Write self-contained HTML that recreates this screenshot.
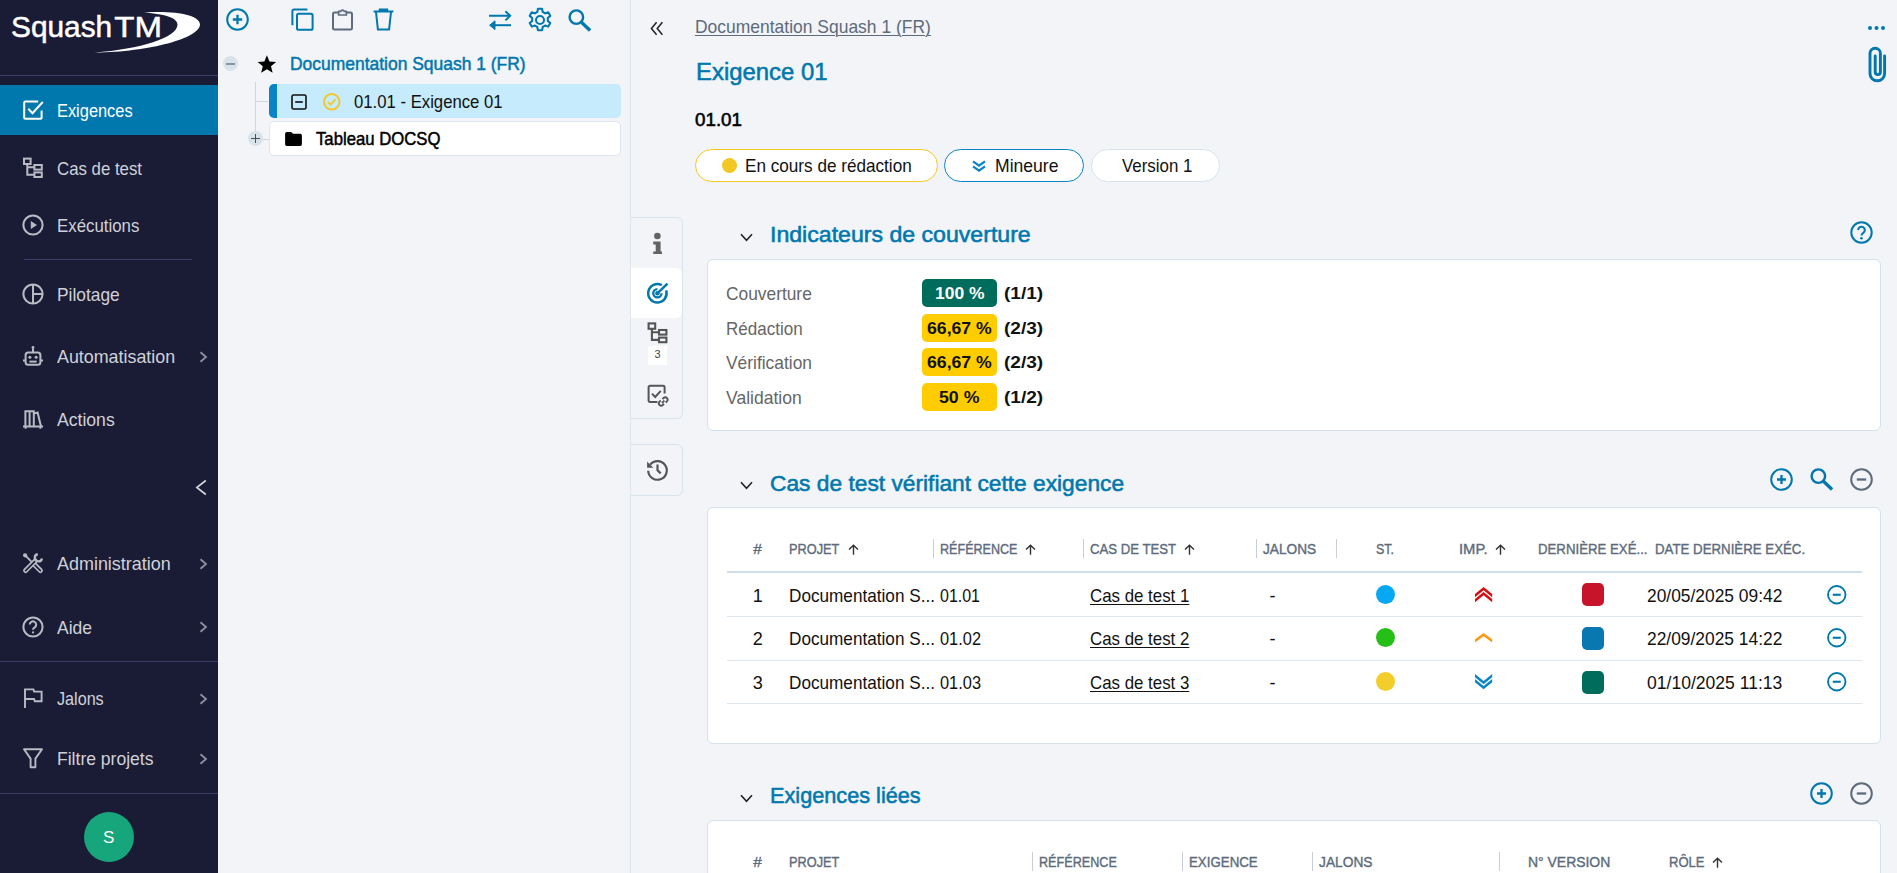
<!DOCTYPE html>
<html lang="fr">
<head>
<meta charset="utf-8">
<title>Squash TM - Exigence 01</title>
<style>
*{box-sizing:border-box;margin:0;padding:0}
html,body{width:1897px;height:873px;overflow:hidden;background:#f2f4f8;font-family:"Liberation Sans",sans-serif;color:#000}
.abs{position:absolute}
svg{display:block;overflow:visible}
.t{position:absolute;white-space:nowrap;line-height:20px;transform-origin:0 0}
#side{position:absolute;left:0;top:0;width:218px;height:873px;background:#1a1c36}
.hr{position:absolute;height:1px;background:#3a3d68}
#tree{position:absolute;left:218px;top:0;width:413px;height:873px;background:#f2f4f8;border-right:1px solid #dfe5ec}
.card{position:absolute;left:707px;width:1174px;background:#fff;border:1px solid #d3e2ec;border-radius:6px}
.sep{position:absolute;width:1px;height:19px;background:#c9ced6}
.rowline{position:absolute;left:727px;width:1135px;height:1px;background:#dbe6ee}
.pill{position:absolute;top:149px;height:33px;border-radius:17px;background:#fff;border:1px solid #d6e3ec}
</style>
</head>
<body>
<div id="side"></div>
<div id="tree"></div>
<!-- SIDEBAR -->
<svg class="abs" style="left:0;top:0;width:218px;height:75px" viewBox="0 0 218 75"><path d="M144 12.400C176 10.500 200 15 200 24.500C200 38 150 52 94.500 52.600C140 49 177.500 38 177.500 24.500C177.500 18 166 14 144 12.400Z" fill="#fff"/></svg>
<div class="t" id="t0" style="left:11.10px;top:16.70px;font-size:30.3px;color:#fff;-webkit-text-stroke:0.5px #fff;transform:scaleX(0.9843);">Squash<span style="display:inline-block;margin-left:2.130px;transform:scaleX(1.108);transform-origin:0 0">TM</span></div>
<div class="hr" style="left:0;top:75px;width:218px"></div>
<div class="abs" style="left:0;top:85px;width:218px;height:50px;background:#0078ae"></div>
<svg class="abs" style="left:21.800px;top:99.4px;width:22px;height:22px" viewBox="0 0 22 22" fill="none" stroke="#fff" stroke-width="2"><path d="M19.600 11.500v7.300a1 1 0 0 1-1 1H3.200a1 1 0 0 1-1-1V3.600a1 1 0 0 1 1-1h13" stroke-width="2"/><path d="M6.300 9.800l4.200 4.400L20.800 3" stroke-width="2"/></svg>
<div class="t" id="t1" style="left:57.30px;top:101.33px;font-size:18.1px;color:#fff;transform:scaleX(0.9056);">Exigences</div>
<svg class="abs" style="left:21.800px;top:157.4px;width:22px;height:22px" viewBox="0 0 22 22" fill="none" stroke="#b9bac4" stroke-width="2"><rect x="2" y="1.600" width="6.600" height="5.400"/><rect x="12.400" y="8" width="7.400" height="4.600"/><rect x="12.400" y="15.400" width="7.400" height="4.600"/><path d="M5.300 7v10.700h7.100M5.300 10.300h7.100"/></svg>
<div class="t" id="t2" style="left:57.30px;top:159.33px;font-size:18.1px;color:#d0d1d8;transform:scaleX(0.9286);">Cas de test</div>
<svg class="abs" style="left:21.800px;top:214.4px;width:22px;height:22px" viewBox="0 0 22 22" fill="none" stroke="#b9bac4" stroke-width="2"><circle cx="11" cy="11" r="9.600"/><path d="M8.800 6.900v8.200l6.200-4.100z" fill="#b9bac4" stroke="none"/></svg>
<div class="t" id="t3" style="left:57.30px;top:216.33px;font-size:18.1px;color:#d0d1d8;transform:scaleX(0.9298);">Exécutions</div>
<svg class="abs" style="left:21.800px;top:283.4px;width:22px;height:22px" viewBox="0 0 22 22" fill="none" stroke="#b9bac4" stroke-width="2"><circle cx="11" cy="11" r="9.600"/><path d="M11 1.400v19.200M11 11h9.600"/></svg>
<div class="t" id="t4" style="left:57.30px;top:285.33px;font-size:18.1px;color:#d0d1d8;transform:scaleX(0.9589);">Pilotage</div>
<svg class="abs" style="left:21.800px;top:345.4px;width:22px;height:22px" viewBox="0 0 22 22" fill="none" stroke="#b9bac4" stroke-width="2"><rect x="3.600" y="7.600" width="14.800" height="12.200" rx="2.600"/><path d="M11 7.600V3.200M1 15.600h2.600M18.400 15.600H21"/><circle cx="11" cy="2.400" r="1.400" fill="#b9bac4" stroke="none"/><circle cx="7.900" cy="12.300" r="1.500" fill="#b9bac4" stroke="none"/><circle cx="14.100" cy="12.300" r="1.500" fill="#b9bac4" stroke="none"/><path d="M7.400 16.600h7.200" stroke-width="2"/></svg>
<div class="t" id="t5" style="left:57.30px;top:347.33px;font-size:18.1px;color:#d0d1d8;transform:scaleX(0.9867);">Automatisation</div>
<svg class="abs" style="left:199px;top:350.7px;width:9px;height:12px" viewBox="0 0 9 12" fill="none" stroke="#8e90a3" stroke-width="1.800"><path d="M1.500 1.200L7 6l-5.500 4.800"/></svg>
<svg class="abs" style="left:21.800px;top:408.4px;width:22px;height:22px" viewBox="0 0 22 22" fill="none" stroke="#b9bac4" stroke-width="2"><path d="M1 18.400h20M3.600 18.400v2.400M18.400 18.400v2.400"/><path d="M3.400 18.400V3.200h4.200v15.200M7.600 18.400V3.200h4.200v15.200M11.800 5.600l3.800-1 3.400 13.800"/></svg>
<div class="t" id="t6" style="left:57.30px;top:410.33px;font-size:18.1px;color:#d0d1d8;transform:scaleX(0.9723);">Actions</div>
<svg class="abs" style="left:21.800px;top:552.4px;width:22px;height:22px" viewBox="0 0 22 22" fill="none" stroke="#b9bac4" stroke-width="2"><path d="M3.200 3.400l7.400 7.400" stroke-width="1.900"/><circle cx="3.100" cy="3.300" r="2.100" fill="#b9bac4" stroke="none"/><path d="M12.400 12.600l6 6" stroke-width="5" stroke-linecap="round"/><path d="M12.400 12.600l6 6" stroke="#1a1c36" stroke-width="1.500" stroke-linecap="round"/><path d="M3.600 18.600L13.200 9" stroke-width="5" stroke-linecap="round"/><path d="M3.600 18.600L13.600 8.600" stroke="#1a1c36" stroke-width="1.500" stroke-linecap="round"/><path d="M19.950 6.430A3.600 3.600 0 1 1 15.770 2.250" stroke-width="2.300"/></svg>
<div class="t" id="t7" style="left:57.30px;top:554.33px;font-size:18.1px;color:#d0d1d8;transform:scaleX(0.9917);">Administration</div>
<svg class="abs" style="left:199px;top:557.7px;width:9px;height:12px" viewBox="0 0 9 12" fill="none" stroke="#8e90a3" stroke-width="1.800"><path d="M1.500 1.200L7 6l-5.500 4.800"/></svg>
<svg class="abs" style="left:21.800px;top:615.9px;width:22px;height:22px" viewBox="0 0 22 22" fill="none" stroke="#b9bac4" stroke-width="2"><circle cx="11" cy="11" r="9.600"/><path d="M7.800 8.600a3.200 3.200 0 1 1 4.900 2.700c-1.100.7-1.700 1.200-1.700 2.500"/><circle cx="11" cy="16.400" r="1.100" fill="#b9bac4" stroke="none"/></svg>
<div class="t" id="t8" style="left:57.30px;top:617.83px;font-size:18.1px;color:#d0d1d8;transform:scaleX(0.9664);">Aide</div>
<svg class="abs" style="left:199px;top:621.2px;width:9px;height:12px" viewBox="0 0 9 12" fill="none" stroke="#8e90a3" stroke-width="1.800"><path d="M1.500 1.200L7 6l-5.500 4.800"/></svg>
<svg class="abs" style="left:21.800px;top:687.4px;width:22px;height:22px" viewBox="0 0 22 22" fill="none" stroke="#b9bac4" stroke-width="2"><path d="M3 21V2.400h8.400l.8 2.200h7.400v9.600h-6.800l-.8-2.200H3" stroke-width="1.900"/></svg>
<div class="t" id="t9" style="left:57.30px;top:689.33px;font-size:18.1px;color:#d0d1d8;transform:scaleX(0.8927);">Jalons</div>
<svg class="abs" style="left:199px;top:692.7px;width:9px;height:12px" viewBox="0 0 9 12" fill="none" stroke="#8e90a3" stroke-width="1.800"><path d="M1.500 1.200L7 6l-5.500 4.800"/></svg>
<svg class="abs" style="left:21.800px;top:747.4px;width:22px;height:22px" viewBox="0 0 22 22" fill="none" stroke="#b9bac4" stroke-width="2"><path d="M2 2.200h18l-6.600 9.400v8.600H8.600v-8.600z" stroke-width="1.900" stroke-linejoin="round"/></svg>
<div class="t" id="t10" style="left:57.30px;top:749.33px;font-size:18.1px;color:#d0d1d8;transform:scaleX(0.9694);">Filtre projets</div>
<svg class="abs" style="left:199px;top:752.7px;width:9px;height:12px" viewBox="0 0 9 12" fill="none" stroke="#8e90a3" stroke-width="1.800"><path d="M1.500 1.200L7 6l-5.500 4.800"/></svg>
<div class="hr" style="left:24px;top:259px;width:168px"></div>
<svg class="abs" style="left:195px;top:479px;width:12px;height:17px" viewBox="0 0 12 17" fill="none" stroke="#d5d6db" stroke-width="1.600"><path d="M10.800 1.500L1.800 8.500l9 7"/></svg>
<div class="hr" style="left:0;top:661px;width:218px"></div>
<div class="hr" style="left:0;top:793px;width:218px"></div>
<div class="abs" style="left:84px;top:812px;width:50px;height:50px;border-radius:50%;background:#17a67c"></div>
<div class="t" id="t11" style="left:103.08px;top:828.11px;font-size:17px;color:#fff;">S</div>
<!-- TREE -->
<svg class="abs" style="left:226px;top:8px;width:23px;height:23px" viewBox="0 0 23 23" fill="none" stroke="#0078ae" stroke-width="2"><circle cx="11.500" cy="11.500" r="10.300"/><path d="M11.500 6.800v9.400M6.800 11.500h9.400" stroke-width="2.300"/></svg>
<svg class="abs" style="left:291px;top:8px;width:23px;height:23px" viewBox="0 0 23 23" fill="none" stroke="#0078ae" stroke-width="2"><path d="M16.400 1.400H3a1.600 1.600 0 0 0-1.600 1.600v14.200"/><rect x="6" y="5.800" width="15.600" height="16" rx="1.600"/></svg>
<svg class="abs" style="left:332px;top:7.500px;width:21px;height:23px" viewBox="0 0 21 23" fill="none" stroke="#5d6b7c" stroke-width="2"><path d="M6.200 4.500H2.400a1.400 1.400 0 0 0-1.400 1.400v14.300a1.400 1.400 0 0 0 1.400 1.400h16.200a1.400 1.400 0 0 0 1.400-1.400V5.900a1.400 1.400 0 0 0-1.400-1.400h-3.800"/><path d="M6.600 7V3.400h2.100a1.900 1.900 0 0 1 3.600 0h2.100V7z" stroke-width="1.700" stroke-linejoin="round"/></svg>
<svg class="abs" style="left:372.500px;top:7.800px;width:21px;height:23px" viewBox="0 0 21 23" fill="none" stroke="#0078ae" stroke-width="2"><path d="M.600 3.600h19.800M6.800 3.400V1.400h7.400v2"/><path d="M3 4l1.900 17.600h11.200L18 4"/></svg>
<svg class="abs" style="left:487.500px;top:10px;width:24px;height:21px" viewBox="0 0 24 21" fill="none" stroke="#0078ae" stroke-width="2"><path d="M1 5.800h21M17.400 1.200l4.800 4.600-4.800 4.600"/><path d="M23 15.200H4"/><path d="M7 10.800L1.600 15.200 7 19.600z" fill="#0078ae" stroke-width="1"/></svg>
<svg class="abs" style="left:526.800px;top:7px;width:26px;height:26px" viewBox="0 0 24 24" fill="none" stroke="#0078ae" stroke-width="1.900" stroke-linejoin="round"><circle cx="12" cy="12" r="3.700"/><path d="M10.100 1.600h3.800l.6 3 2.200 1.300 2.900-1 1.900 3.300-2.300 2 0 2.600 2.300 2-1.900 3.300-2.900-1-2.200 1.300-.6 3h-3.800l-.6-3-2.200-1.300-2.900 1-1.900-3.300 2.300-2 0-2.600-2.300-2 1.900-3.300 2.900 1 2.200-1.300z"/></svg>
<svg class="abs" style="left:568px;top:9px;width:23px;height:23px" viewBox="0 0 23 23" fill="none" stroke="#0078ae" stroke-width="2.400"><circle cx="8.350" cy="8.150" r="6.750"/><path d="M13.200 13l8.900 8.500" stroke-width="3.300"/></svg>
<div class="abs" style="left:223px;top:56px;width:15px;height:15px;border-radius:50%;background:#d8e2e9"></div>
<div class="abs" style="left:226px;top:62.500px;width:9px;height:2px;background:#8a949c"></div>
<svg class="abs" style="left:257.300px;top:55px;width:19.800px;height:18.500px" viewBox="0 0 20 19"><path d="M10 0.300l2.600 6.400 6.900 .5-5.300 4.400 1.700 6.700L10 14.600l-5.900 3.700 1.700-6.700L.5 7.200l6.900-.5z" fill="#000"/></svg>
<div class="abs" style="left:255px;top:82px;width:1px;height:57px;background:#d0d5da"></div>
<div class="abs" style="left:255px;top:101px;width:13px;height:1px;background:#d0d5da"></div>
<div class="abs" style="left:263px;top:138.500px;width:6px;height:1px;background:#d0d5da"></div>
<div class="abs" style="left:269px;top:84px;width:352px;height:34px;background:#c5ebfc;border-left:8px solid #0a84c6;border-radius:5px"></div>
<svg class="abs" style="left:291px;top:93.500px;width:16px;height:16px" viewBox="0 0 16 16" fill="none" stroke="#111" stroke-width="1.600"><rect x="1" y="1" width="14" height="14" rx="1.600"/><path d="M4.200 8h7.600"/></svg>
<svg class="abs" style="left:323px;top:92.800px;width:17.500px;height:17.500px" viewBox="0 0 18 18" fill="none" stroke="#f3c724" stroke-width="1.900"><circle cx="9" cy="9" r="8"/><path d="M5.200 9.400l2.600 2.700 5-5.600"/></svg>
<div class="abs" style="left:269px;top:121px;width:352px;height:35px;background:#fff;border:1px solid #dde6ee;border-radius:5px"></div>
<div class="abs" style="left:248px;top:131px;width:15px;height:15px;border-radius:50%;background:#d8e2e9"></div>
<div class="abs" style="left:251px;top:137.700px;width:9px;height:1.600px;background:#4a4f55"></div>
<div class="abs" style="left:254.700px;top:134px;width:1.600px;height:9px;background:#4a4f55"></div>
<svg class="abs" style="left:284.500px;top:132px;width:17px;height:14px" viewBox="0 0 18 15"><path d="M1.800 0h4.800l1.800 1.900h7.800a1.800 1.800 0 0 1 1.800 1.800v9.500a1.800 1.800 0 0 1-1.800 1.800H1.800A1.800 1.800 0 0 1 0 13.200V1.800A1.800 1.800 0 0 1 1.800 0z" fill="#000"/></svg>

<div class="t" id="t12" style="left:289.70px;top:54.33px;font-size:18.1px;color:#0078ae;-webkit-text-stroke:0.5px #0078ae;transform:scaleX(0.9644);">Documentation Squash 1 (FR)</div>
<div class="t" id="t13" style="left:354.00px;top:92.43px;font-size:18.1px;color:#111;transform:scaleX(0.9233);">01.01 - Exigence 01</div>
<div class="t" id="t14" style="left:315.90px;top:129.03px;font-size:18.1px;color:#000;-webkit-text-stroke:0.5px #000;transform:scaleX(0.9231);">Tableau DOCSQ</div>
<!-- MAIN -->
<svg class="abs" style="left:650px;top:21px;width:14px;height:15px" viewBox="0 0 14 15" fill="none" stroke="#222" stroke-width="1.500"><path d="M6.600 1.200L1.400 7.500l5.200 6.300M12.400 1.200L7.200 7.500l5.200 6.300"/></svg>
<div class="abs" style="left:1868px;top:26px;width:4px;height:4px;border-radius:50%;background:#0078ae;box-shadow:6.500px 0 0 #0078ae,13px 0 0 #0078ae"></div>
<svg class="abs" style="left:1867px;top:44.500px;width:20px;height:37px" viewBox="0 0 20 37" fill="none" stroke="#0078ae" stroke-width="2.900" stroke-linecap="round"><path d="M17.600 11v17.500a7.300 7.300 0 0 1-14.600 0V8.400a5.200 5.200 0 0 1 10.400 0v18.600a2.600 2.600 0 0 1-5.200 0V11"/></svg>
<div class="abs" style="left:631px;top:217px;width:52px;height:202px;border:1px solid #d8e5ec;border-left:none;border-radius:0 6px 6px 0;background:#f2f4f8"></div>
<div class="abs" style="left:631px;top:268px;width:51px;height:50px;background:#fff;border-radius:0 6px 6px 0"></div>
<div class="abs" style="left:631px;top:444px;width:52px;height:52px;border:1px solid #d8e5ec;border-left:none;border-radius:0 6px 6px 0;background:#f2f4f8"></div>
<svg class="abs" style="left:650px;top:230px;width:14px;height:25px" viewBox="0 0 14 25" fill="#636363"><circle cx="7.400" cy="6" r="3.300"/><path d="M3.200 11.600H10.600V21.400H12V24H3.200V21.400H5.700V14.400H3.200Z"/></svg>
<svg class="abs" style="left:646px;top:282px;width:23px;height:23px" viewBox="0 0 23 23" fill="none" stroke="#0078ae" stroke-width="2.500"><path d="M20.150 8.460A9.200 9.200 0 1 1 15.720 3.180"/><path d="M15.550 11.300A4.150 4.150 0 1 1 11.400 7.150" stroke-width="2.300"/><path d="M11.400 11.300L21.500 1.700" stroke-width="2.500"/><circle cx="11.400" cy="11.300" r="2.200" fill="#0078ae" stroke="none"/></svg>
<svg class="abs" style="left:647px;top:322px;width:21px;height:22px" viewBox="0 0 21 22" fill="none" stroke="#555" stroke-width="2.100"><rect x="1.600" y="1.400" width="6.600" height="5.400"/><rect x="12" y="8" width="7.400" height="4.600"/><rect x="12" y="15.600" width="7.400" height="4.600"/><path d="M4.900 6.800v11.100H12M4.900 10.300H12"/></svg>
<div class="abs" style="left:648px;top:346px;width:19px;height:19px;background:#fff;font-size:11px;line-height:16px;text-align:center;color:#444">3</div>
<svg class="abs" style="left:647px;top:384px;width:23px;height:22px" viewBox="0 0 23 22" fill="none" stroke="#555" stroke-width="2"><path d="M17.600 9.400V3.200a1.400 1.400 0 0 0-1.400-1.400H3a1.400 1.400 0 0 0-1.400 1.400v13.400A1.400 1.400 0 0 0 3 18h7.400"/><path d="M5 9.600l3.200 3.400 5.600-6.200"/><path d="M15.400 15.200l1.200-1.200a2.300 2.300 0 0 1 3.300 3.300l-1.200 1.200M17 19.800l-1.200 1.200a2.300 2.300 0 0 1-3.300-3.300l1.200-1.200M15 19l2.400-2.400" stroke-width="1.800"/></svg>
<svg class="abs" style="left:646px;top:459px;width:23px;height:23px" viewBox="0 0 23 23" fill="none" stroke="#555" stroke-width="2.200"><path d="M4.170 5.670A9.300 9.300 0 1 1 2.200 11.700"/><path d="M1.100 2.400V8.700H7.300Z" fill="#555" stroke="none"/><path d="M11.500 5.400V11.200L14.700 14.400"/></svg>
<svg class="abs" style="left:1850px;top:221px;width:23px;height:23px" viewBox="0 0 23 23" fill="none" stroke="#0078ae" stroke-width="2"><circle cx="11.500" cy="11.500" r="10.200"/><path d="M8.200 9a3.300 3.300 0 1 1 5.100 2.800c-1.200.800-1.800 1.300-1.800 2.600" stroke-width="2.100"/><circle cx="11.500" cy="17.300" r="1.300" fill="#0078ae" stroke="none"/></svg>

<div class="t" id="t15" style="left:694.70px;top:17.43px;font-size:18.1px;color:#5d6b7c;transform:scaleX(0.9653);text-decoration:underline;text-decoration-thickness:1px;text-underline-offset:2px">Documentation Squash 1 (FR)</div>
<div class="t" id="t16" style="left:695.50px;top:62.08px;font-size:24.6px;color:#0078ae;-webkit-text-stroke:0.55px #0078ae;transform:scaleX(0.9714);">Exigence 01</div>
<div class="t" id="t17" style="left:695.00px;top:110.02px;font-size:18.4px;color:#000;-webkit-text-stroke:0.55px #000;transform:scaleX(1.0210);">01.01</div>
<div class="pill" style="left:695px;width:243px;border-color:#f3c724"></div>
<div class="abs" style="left:722px;top:158px;width:15px;height:15px;border-radius:50%;background:#f3c724"></div>
<div class="t" id="t18" style="left:744.80px;top:155.93px;font-size:18.1px;color:#111;transform:scaleX(0.9470);">En cours de rédaction</div>
<div class="pill" style="left:944px;width:140px;border-color:#0a84c6"></div>
<svg class="abs" style="left:972px;top:160px;width:14px;height:12px" viewBox="0 0 14 12" fill="none" stroke="#0a84c6" stroke-width="2.300"><path d="M1 1.400l6 4.200 6-4.200M1 6.400l6 4.200 6-4.200"/></svg>
<div class="t" id="t19" style="left:994.50px;top:155.93px;font-size:18.1px;color:#111;transform:scaleX(0.9713);">Mineure</div>
<div class="pill" style="left:1091px;width:129px"></div>
<div class="t" id="t20" style="left:1122.00px;top:155.93px;font-size:18.1px;color:#111;transform:scaleX(0.9330);">Version 1</div>
<svg class="abs" style="left:740px;top:233px;width:13px;height:9px" viewBox="0 0 13 9" fill="none" stroke="#222" stroke-width="1.600"><path d="M1 1.200L6.500 7.400 12 1.200"/></svg>
<div class="t" id="t21" style="left:769.70px;top:225.24px;font-size:22.4px;color:#0078ae;-webkit-text-stroke:0.55px #0078ae;transform:scaleX(1.0318);">Indicateurs de couverture</div>
<div class="card" style="top:259px;height:172px"></div>
<div class="t" id="t22" style="left:726.30px;top:283.93px;font-size:18.1px;color:#666;transform:scaleX(0.9585);">Couverture</div>
<div class="abs" style="left:922px;top:279px;width:75px;height:28px;border-radius:5px;background:#006c5c"></div>
<div class="t" id="t23" style="left:935.10px;top:284.01px;font-size:17px;color:#fff;font-weight:bold;transform:scaleX(1.0269);">100 %</div>
<div class="t" id="t24" style="left:1003.80px;top:284.01px;font-size:17px;color:#111;font-weight:bold;transform:scaleX(1.1210);">(1/1)</div>
<div class="t" id="t25" style="left:726.30px;top:318.53px;font-size:18.1px;color:#666;transform:scaleX(0.9401);">Rédaction</div>
<div class="abs" style="left:922px;top:314px;width:75px;height:28px;border-radius:5px;background:#ffcc00"></div>
<div class="t" id="t26" style="left:927.10px;top:318.61px;font-size:17px;color:#111;font-weight:bold;transform:scaleX(1.0386);">66,67 %</div>
<div class="t" id="t27" style="left:1003.80px;top:318.61px;font-size:17px;color:#111;font-weight:bold;transform:scaleX(1.1210);">(2/3)</div>
<div class="t" id="t28" style="left:726.30px;top:352.93px;font-size:18.1px;color:#666;transform:scaleX(0.9607);">Vérification</div>
<div class="abs" style="left:922px;top:348px;width:75px;height:28px;border-radius:5px;background:#ffcc00"></div>
<div class="t" id="t29" style="left:927.10px;top:353.01px;font-size:17px;color:#111;font-weight:bold;transform:scaleX(1.0386);">66,67 %</div>
<div class="t" id="t30" style="left:1003.80px;top:353.01px;font-size:17px;color:#111;font-weight:bold;transform:scaleX(1.1210);">(2/3)</div>
<div class="t" id="t31" style="left:726.30px;top:387.73px;font-size:18.1px;color:#666;transform:scaleX(0.9688);">Validation</div>
<div class="abs" style="left:922px;top:383px;width:75px;height:28px;border-radius:5px;background:#ffcc00"></div>
<div class="t" id="t32" style="left:939.20px;top:387.81px;font-size:17px;color:#111;font-weight:bold;transform:scaleX(1.0426);">50 %</div>
<div class="t" id="t33" style="left:1003.80px;top:387.81px;font-size:17px;color:#111;font-weight:bold;transform:scaleX(1.1210);">(1/2)</div>
<svg class="abs" style="left:740px;top:481px;width:13px;height:9px" viewBox="0 0 13 9" fill="none" stroke="#222" stroke-width="1.600"><path d="M1 1.200L6.500 7.400 12 1.200"/></svg>
<div class="t" id="t34" style="left:769.70px;top:473.84px;font-size:22.4px;color:#0078ae;-webkit-text-stroke:0.55px #0078ae;transform:scaleX(1.0161);">Cas de test vérifiant cette exigence</div>
<svg class="abs" style="left:1770px;top:468px;width:23px;height:23px" viewBox="0 0 23 23" fill="none" stroke="#0078ae" stroke-width="2"><circle cx="11.500" cy="11.500" r="10.300"/><path d="M11.500 7v9M7 11.500h9" stroke-width="2.300"/></svg>
<svg class="abs" style="left:1810px;top:468px;width:23px;height:23px" viewBox="0 0 23 23" fill="none" stroke="#0078ae" stroke-width="2.400"><circle cx="8.350" cy="8.150" r="6.750"/><path d="M13.200 13l8.900 8.500" stroke-width="3.300"/></svg>
<svg class="abs" style="left:1850px;top:468px;width:23px;height:23px" viewBox="0 0 23 23" fill="none" stroke="#5d6b7c" stroke-width="2"><circle cx="11.500" cy="11.500" r="10.300"/><path d="M6.800 11.500h9.400" stroke-width="2.3"/></svg>
<div class="card" style="top:507px;height:237px"></div>
<div class="t" id="t35" style="left:753.37px;top:538.96px;font-size:15.4px;color:#5d6b7c;-webkit-text-stroke:0.4px #5d6b7c;">#</div>
<div class="t" id="t36" style="left:788.80px;top:538.96px;font-size:15.4px;color:#5d6b7c;-webkit-text-stroke:0.4px #5d6b7c;transform:scaleX(0.8284);">PROJET</div>
<svg class="abs" style="left:847.5px;top:544.4px;width:11px;height:11px" viewBox="0 0 11 11" fill="none" stroke="#333" stroke-width="1.400"><path d="M5.500 10.800V1.200M1 5.600l4.500-4.400L10 5.600"/></svg>
<div class="sep" style="left:933px;top:539px"></div>
<div class="t" id="t37" style="left:940.30px;top:538.96px;font-size:15.4px;color:#5d6b7c;-webkit-text-stroke:0.4px #5d6b7c;transform:scaleX(0.8165);">RÉFÉRENCE</div>
<svg class="abs" style="left:1025.4px;top:544.4px;width:11px;height:11px" viewBox="0 0 11 11" fill="none" stroke="#333" stroke-width="1.400"><path d="M5.500 10.800V1.200M1 5.600l4.500-4.400L10 5.600"/></svg>
<div class="sep" style="left:1083px;top:539px"></div>
<div class="t" id="t38" style="left:1089.90px;top:538.96px;font-size:15.4px;color:#5d6b7c;-webkit-text-stroke:0.4px #5d6b7c;transform:scaleX(0.8555);">CAS DE TEST</div>
<svg class="abs" style="left:1183.6px;top:544.4px;width:11px;height:11px" viewBox="0 0 11 11" fill="none" stroke="#333" stroke-width="1.400"><path d="M5.500 10.800V1.200M1 5.600l4.500-4.400L10 5.600"/></svg>
<div class="sep" style="left:1256px;top:539px"></div>
<div class="t" id="t39" style="left:1262.60px;top:538.96px;font-size:15.4px;color:#5d6b7c;-webkit-text-stroke:0.4px #5d6b7c;transform:scaleX(0.8885);">JALONS</div>
<div class="sep" style="left:1336px;top:539px"></div>
<div class="t" id="t40" style="left:1375.80px;top:538.96px;font-size:15.4px;color:#5d6b7c;-webkit-text-stroke:0.4px #5d6b7c;transform:scaleX(0.8090);">ST.</div>
<div class="t" id="t41" style="left:1459.10px;top:538.96px;font-size:15.4px;color:#5d6b7c;-webkit-text-stroke:0.4px #5d6b7c;transform:scaleX(0.9610);">IMP.</div>
<svg class="abs" style="left:1495px;top:544.4px;width:11px;height:11px" viewBox="0 0 11 11" fill="none" stroke="#333" stroke-width="1.400"><path d="M5.500 10.800V1.200M1 5.600l4.500-4.400L10 5.600"/></svg>
<div class="t" id="t42" style="left:1537.50px;top:538.96px;font-size:15.4px;color:#5d6b7c;-webkit-text-stroke:0.4px #5d6b7c;transform:scaleX(0.8592);">DERNIÈRE EXÉ...</div>
<div class="t" id="t43" style="left:1654.50px;top:538.96px;font-size:15.4px;color:#5d6b7c;-webkit-text-stroke:0.4px #5d6b7c;transform:scaleX(0.8617);">DATE DERNIÈRE EXÉC.</div>
<div class="rowline" style="top:571px;height:2px;background:#cfdfe9"></div>
<div class="t" id="t44" style="left:752.71px;top:585.63px;font-size:18.1px;color:#111;">1</div>
<div class="t" id="t45" style="left:789.30px;top:585.63px;font-size:18.1px;color:#111;transform:scaleX(0.9487);">Documentation S...</div>
<div class="t" id="t46" style="left:940.00px;top:585.63px;font-size:18.1px;color:#111;transform:scaleX(0.8834);">01.01</div>
<div class="t" id="t47" style="left:1089.70px;top:585.63px;font-size:18.1px;color:#111;transform:scaleX(0.9313);text-decoration:underline;text-decoration-thickness:1px;text-underline-offset:2px">Cas de test 1</div>
<div class="t" id="t48" style="left:1269.58px;top:585.63px;font-size:18.1px;color:#111;">-</div>
<div class="abs" style="left:1376px;top:584.6px;width:19px;height:19px;border-radius:50%;background:#06a8f4"></div>
<svg class="abs" style="left:1474.8px;top:586.6px;width:17.2px;height:15.3px" viewBox="0 0 17.2 15.3" fill="#d40f14"><polygon points="0.00,7.00 8.60,0.00 17.20,7.00 17.20,10.30 8.60,3.30 0.00,10.30"/><polygon points="0.00,12.00 8.60,5.00 17.20,12.00 17.20,15.30 8.60,8.30 0.00,15.30"/></svg>
<div class="abs" style="left:1582px;top:582.9px;width:22px;height:23px;border-radius:5px;background:#c8142a"></div>
<div class="t" id="t49" style="left:1647.30px;top:585.63px;font-size:18.1px;color:#111;transform:scaleX(0.9611);">20/05/2025 09:42</div>
<svg class="abs" style="left:1826.5px;top:584.7px;width:19.5px;height:19.5px" viewBox="0 0 23 23" fill="none" stroke="#0078ae" stroke-width="2.2"><circle cx="11.500" cy="11.500" r="10.300"/><path d="M6.800 11.500h9.400" stroke-width="2.5"/></svg>
<div class="t" id="t50" style="left:752.71px;top:629.43px;font-size:18.1px;color:#111;">2</div>
<div class="t" id="t51" style="left:789.30px;top:629.43px;font-size:18.1px;color:#111;transform:scaleX(0.9487);">Documentation S...</div>
<div class="t" id="t52" style="left:940.00px;top:629.43px;font-size:18.1px;color:#111;transform:scaleX(0.9055);">01.02</div>
<div class="t" id="t53" style="left:1089.70px;top:629.43px;font-size:18.1px;color:#111;transform:scaleX(0.9313);text-decoration:underline;text-decoration-thickness:1px;text-underline-offset:2px">Cas de test 2</div>
<div class="t" id="t54" style="left:1269.58px;top:629.43px;font-size:18.1px;color:#111;">-</div>
<div class="abs" style="left:1376px;top:628.3px;width:19px;height:19px;border-radius:50%;background:#25bf17"></div>
<svg class="abs" style="left:1474.8px;top:632.9px;width:17.2px;height:9.4px" viewBox="0 0 17.2 9.4" fill="#ff9a16"><polygon points="0.00,6.20 8.60,0.00 17.20,6.20 17.20,9.40 8.60,3.20 0.00,9.40"/></svg>
<div class="abs" style="left:1582px;top:626.6px;width:22px;height:23px;border-radius:5px;background:#0a78b0"></div>
<div class="t" id="t55" style="left:1647.30px;top:629.43px;font-size:18.1px;color:#111;transform:scaleX(0.9611);">22/09/2025 14:22</div>
<svg class="abs" style="left:1826.5px;top:628.4px;width:19.5px;height:19.5px" viewBox="0 0 23 23" fill="none" stroke="#0078ae" stroke-width="2.2"><circle cx="11.500" cy="11.500" r="10.300"/><path d="M6.800 11.500h9.400" stroke-width="2.5"/></svg>
<div class="t" id="t56" style="left:752.71px;top:673.43px;font-size:18.1px;color:#111;">3</div>
<div class="t" id="t57" style="left:789.30px;top:673.43px;font-size:18.1px;color:#111;transform:scaleX(0.9487);">Documentation S...</div>
<div class="t" id="t58" style="left:940.00px;top:673.43px;font-size:18.1px;color:#111;transform:scaleX(0.9055);">01.03</div>
<div class="t" id="t59" style="left:1089.70px;top:673.43px;font-size:18.1px;color:#111;transform:scaleX(0.9313);text-decoration:underline;text-decoration-thickness:1px;text-underline-offset:2px">Cas de test 3</div>
<div class="t" id="t60" style="left:1269.58px;top:673.43px;font-size:18.1px;color:#111;">-</div>
<div class="abs" style="left:1376px;top:672.2px;width:19px;height:19px;border-radius:50%;background:#f3ce2a"></div>
<svg class="abs" style="left:1474.8px;top:674.2px;width:17.2px;height:15.3px" viewBox="0 0 17.2 15.3" fill="#0a84c6"><polygon points="0.00,8.30 8.60,15.30 17.20,8.30 17.20,5.00 8.60,12.00 0.00,5.00"/><polygon points="0.00,3.30 8.60,10.30 17.20,3.30 17.20,0.00 8.60,7.00 0.00,0.00"/></svg>
<div class="abs" style="left:1582px;top:670.5px;width:22px;height:23px;border-radius:5px;background:#006c5c"></div>
<div class="t" id="t61" style="left:1647.30px;top:673.43px;font-size:18.1px;color:#111;transform:scaleX(0.9704);">01/10/2025 11:13</div>
<svg class="abs" style="left:1826.5px;top:672.3px;width:19.5px;height:19.5px" viewBox="0 0 23 23" fill="none" stroke="#0078ae" stroke-width="2.2"><circle cx="11.500" cy="11.500" r="10.300"/><path d="M6.800 11.500h9.400" stroke-width="2.5"/></svg>
<div class="rowline" style="top:616px"></div>
<div class="rowline" style="top:660px"></div>
<div class="rowline" style="top:703px"></div>
<svg class="abs" style="left:740px;top:794px;width:13px;height:9px" viewBox="0 0 13 9" fill="none" stroke="#222" stroke-width="1.600"><path d="M1 1.200L6.500 7.400 12 1.200"/></svg>
<div class="t" id="t62" style="left:769.70px;top:786.34px;font-size:22.4px;color:#0078ae;-webkit-text-stroke:0.55px #0078ae;transform:scaleX(0.9686);">Exigences liées</div>
<svg class="abs" style="left:1810px;top:782px;width:23px;height:23px" viewBox="0 0 23 23" fill="none" stroke="#0078ae" stroke-width="2"><circle cx="11.500" cy="11.500" r="10.300"/><path d="M11.500 7v9M7 11.500h9" stroke-width="2.300"/></svg>
<svg class="abs" style="left:1850px;top:782px;width:23px;height:23px" viewBox="0 0 23 23" fill="none" stroke="#5d6b7c" stroke-width="2"><circle cx="11.500" cy="11.500" r="10.300"/><path d="M6.800 11.500h9.400" stroke-width="2.3"/></svg>
<div class="card" style="top:820px;height:80px"></div>
<div class="t" id="t63" style="left:753.37px;top:851.66px;font-size:15.4px;color:#5d6b7c;-webkit-text-stroke:0.4px #5d6b7c;">#</div>
<div class="t" id="t64" style="left:788.80px;top:851.66px;font-size:15.4px;color:#5d6b7c;-webkit-text-stroke:0.4px #5d6b7c;transform:scaleX(0.8284);">PROJET</div>
<div class="sep" style="left:1032px;top:852px"></div>
<div class="t" id="t65" style="left:1038.60px;top:851.66px;font-size:15.4px;color:#5d6b7c;-webkit-text-stroke:0.4px #5d6b7c;transform:scaleX(0.8207);">RÉFÉRENCE</div>
<div class="sep" style="left:1182px;top:852px"></div>
<div class="t" id="t66" style="left:1188.50px;top:851.66px;font-size:15.4px;color:#5d6b7c;-webkit-text-stroke:0.4px #5d6b7c;transform:scaleX(0.8636);">EXIGENCE</div>
<div class="sep" style="left:1312px;top:852px"></div>
<div class="t" id="t67" style="left:1318.70px;top:851.66px;font-size:15.4px;color:#5d6b7c;-webkit-text-stroke:0.4px #5d6b7c;transform:scaleX(0.8935);">JALONS</div>
<div class="sep" style="left:1499px;top:852px"></div>
<div class="t" id="t68" style="left:1527.70px;top:851.66px;font-size:15.4px;color:#5d6b7c;-webkit-text-stroke:0.4px #5d6b7c;transform:scaleX(0.9061);">N° VERSION</div>
<div class="t" id="t69" style="left:1669.10px;top:851.66px;font-size:15.4px;color:#5d6b7c;-webkit-text-stroke:0.4px #5d6b7c;transform:scaleX(0.8492);">RÔLE</div>
<svg class="abs" style="left:1712px;top:857px;width:11px;height:11px" viewBox="0 0 11 11" fill="none" stroke="#333" stroke-width="1.400"><path d="M5.500 10.800V1.200M1 5.600l4.500-4.400L10 5.600"/></svg>
</body>
</html>
